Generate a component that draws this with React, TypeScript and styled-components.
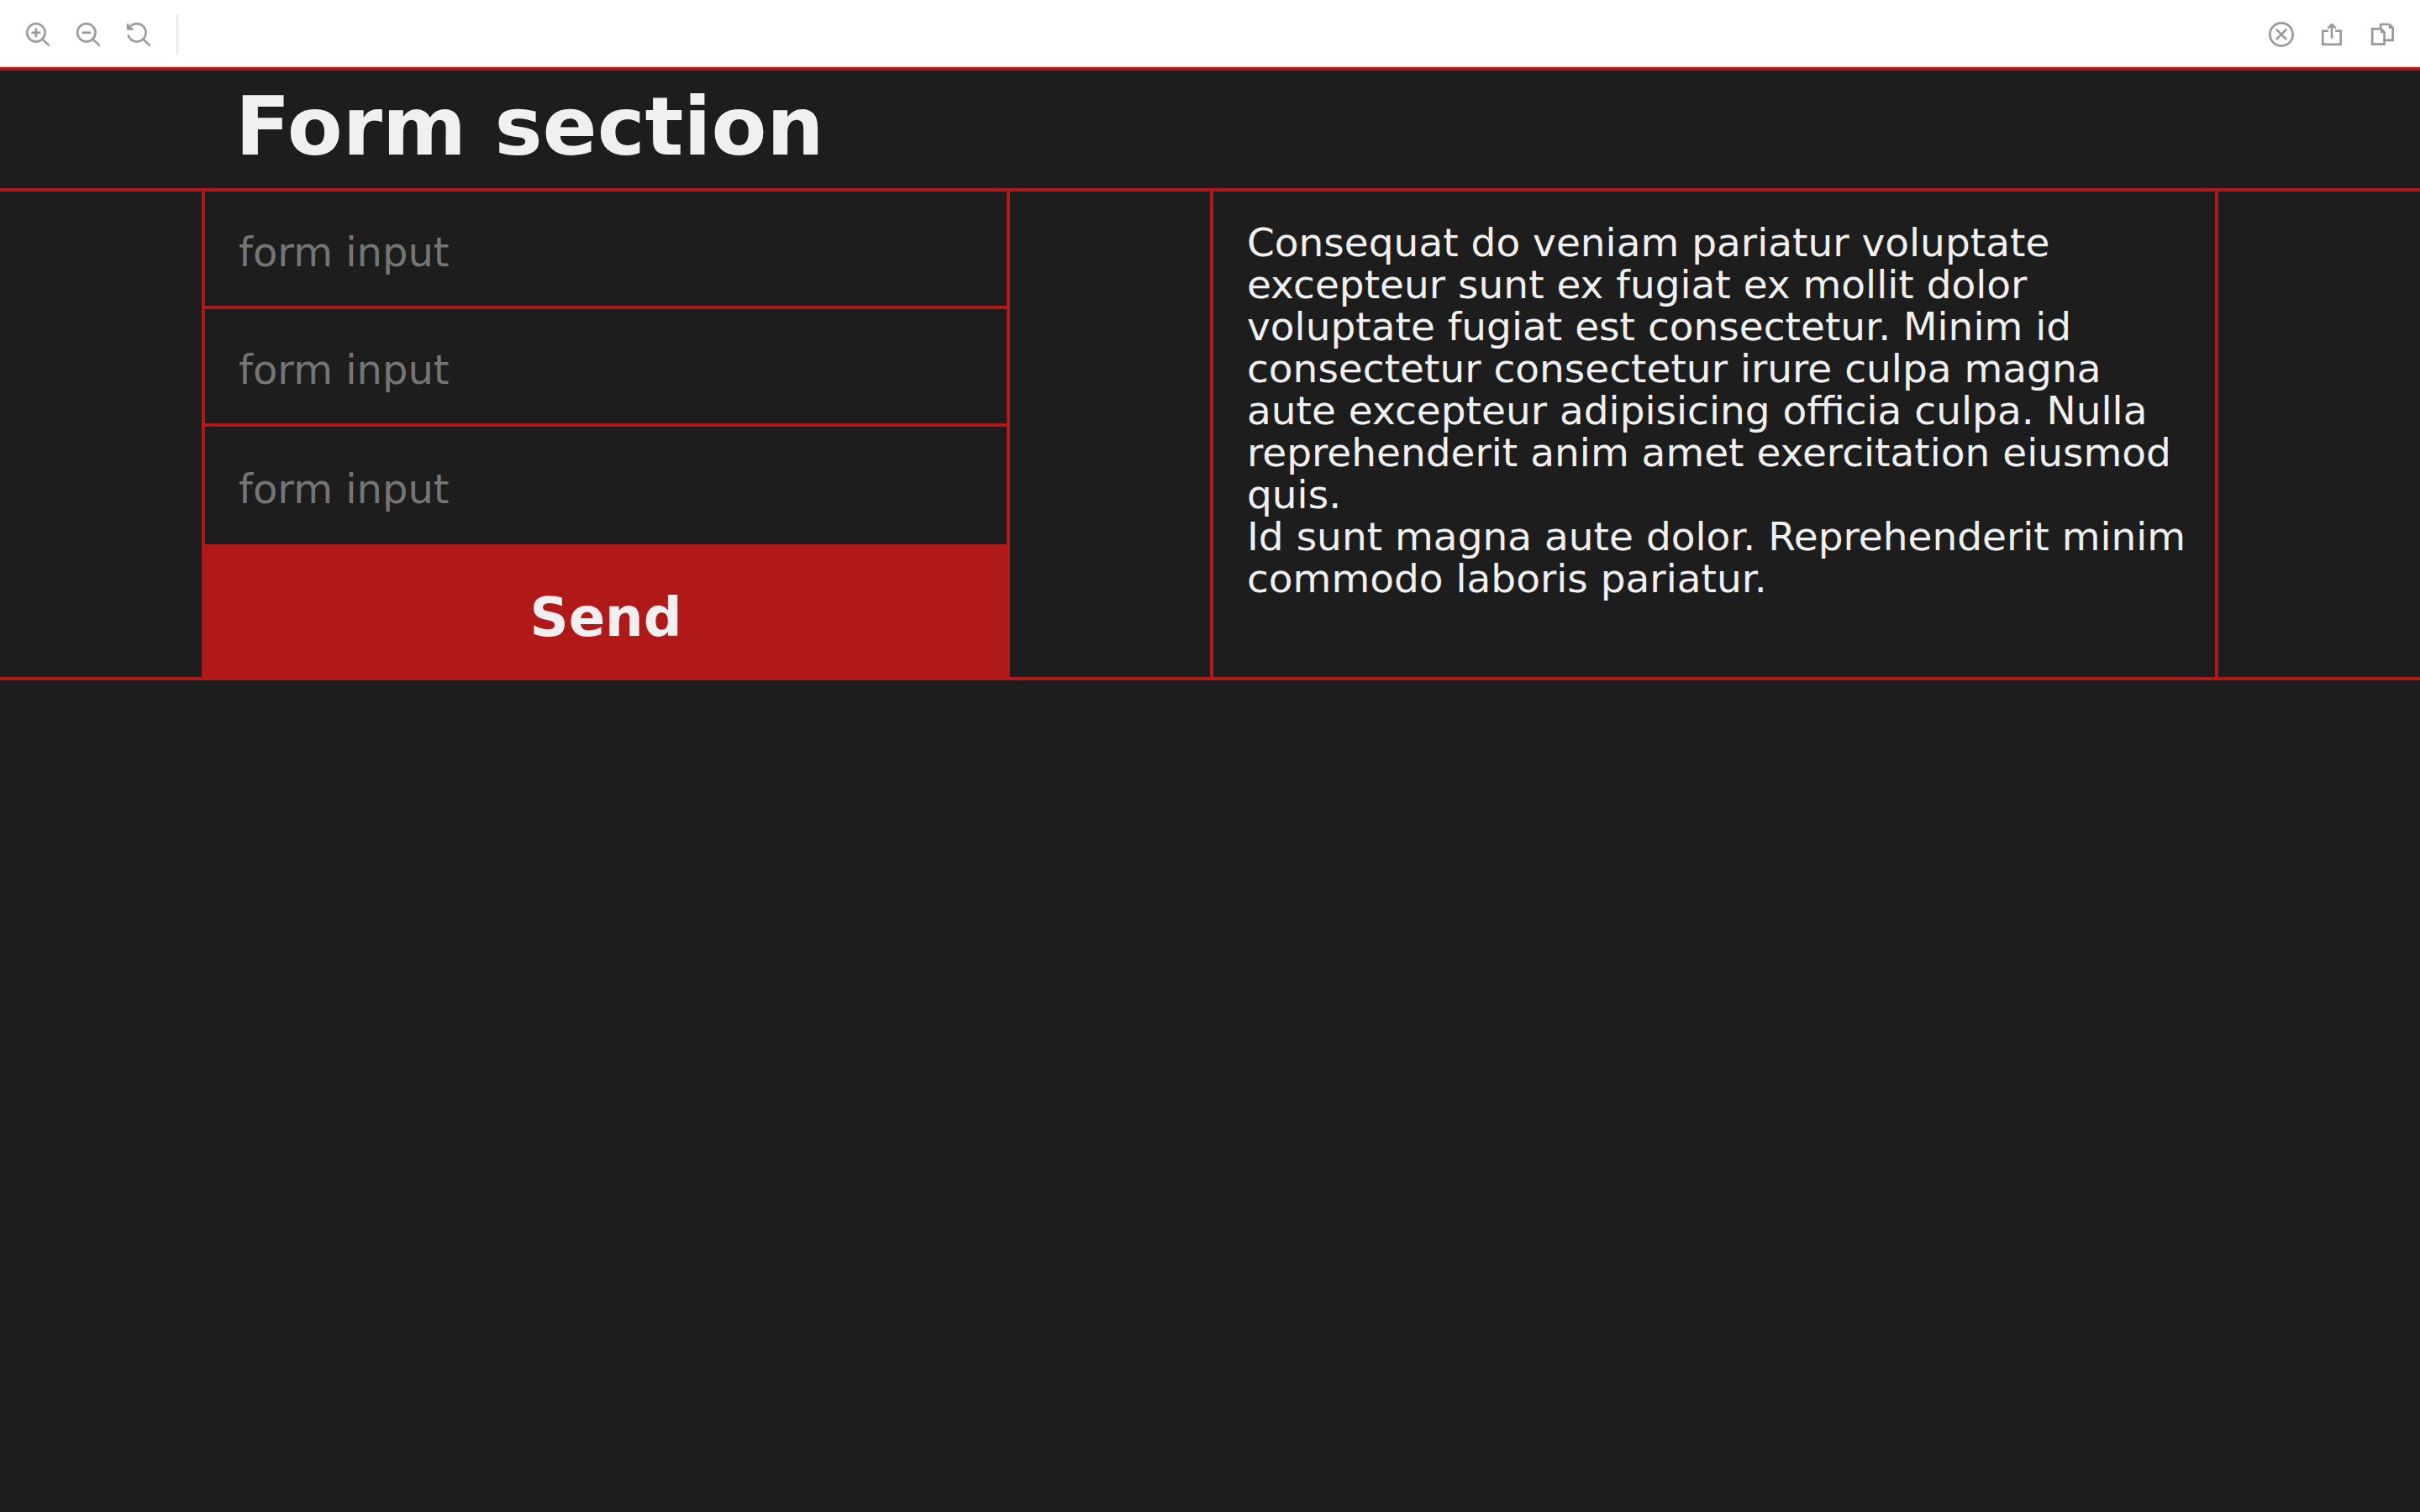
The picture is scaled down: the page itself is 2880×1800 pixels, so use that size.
import React from "react";
import styled, { createGlobalStyle } from "styled-components";

const theme = {
  red: "#b11818",
  dark: "#1d1d1d",
  light: "#f0f0f0",
  muted: "#757575",
  icon: "#999999",
  rule: "#e6e6e6",
};

const GlobalStyle = createGlobalStyle`
  *, *::before, *::after { box-sizing: border-box; }
  body {
    margin: 0;
    background: ${theme.dark};
    color: ${theme.light};
    font-family: "DejaVu Sans", Verdana, sans-serif;
  }
`;

const Toolbar = styled.header`
  display: flex;
  align-items: center;
  justify-content: space-between;
  height: 80px;
  padding: 4px 15px 0;
  background: #ffffff;
  border-bottom: 2px solid ${theme.rule};
`;

const ToolGroup = styled.div`
  display: flex;
  align-items: center;
`;

const ToolButton = styled.button`
  display: flex;
  align-items: center;
  justify-content: center;
  width: 60px;
  height: 56px;
  padding: 0;
  border: 0;
  background: transparent;
  color: ${theme.icon};
  cursor: pointer;
`;

const Divider = styled.span`
  width: 2px;
  height: 48px;
  margin-left: 15px;
  background: ${theme.rule};
`;

const Icon = styled.svg`
  display: block;
  width: 30px;
  height: 30px;
  fill: currentColor;
`;

const SolidGroup = styled.g`
  stroke: currentColor;
  stroke-width: 0.25;
`;

const LineGroup = styled.g`
  fill: none;
  stroke: currentColor;
  stroke-width: 1.25;
`;

const Section = styled.section`
  border-top: 4px solid ${theme.red};
  border-bottom: 4px solid ${theme.red};
`;

const SectionHeader = styled.div`
  display: flex;
  align-items: center;
  height: 144px;
  padding: 0 0 6px calc(100% / 12 + 40px);
  border-bottom: 4px solid ${theme.red};
`;

const Title = styled.h1`
  margin: 0;
  font-size: 96px;
  line-height: 120px;
  font-weight: 700;
`;

const Columns = styled.div`
  display: grid;
  grid-template-columns: 1fr 4fr 1fr 5fr 1fr;
`;

const Form = styled.form`
  grid-column: 2;
  display: flex;
  flex-direction: column;
  margin-right: -2px;
  border: solid ${theme.red};
  border-width: 0 4px;
`;

const Field = styled.input`
  width: 100%;
  height: 140px;
  padding: 8px 40px 0;
  border: 0;
  border-bottom: 4px solid ${theme.red};
  border-radius: 0;
  outline: 0;
  background: transparent;
  color: ${theme.light};
  font-family: inherit;
  font-size: 48px;

  &:last-of-type {
    border-bottom: 0;
  }

  &::placeholder {
    color: ${theme.muted};
    opacity: 1;
  }
`;

const SendButton = styled.button`
  height: 158px;
  padding: 16px 0 0;
  border: 0;
  background: ${theme.red};
  color: ${theme.light};
  font-family: inherit;
  font-size: 64px;
  font-weight: 700;
  cursor: pointer;
`;

const Copy = styled.div`
  grid-column: 4;
  padding: 36px 32px 36px 40px;
  border: solid ${theme.red};
  border-width: 0 4px;
  font-size: 47px;
  line-height: 50px;
`;

const Paragraph = styled.p`
  margin: 0;
`;

const LENS =
  "M9.544 10.206a5.5 5.5 0 11.662-.662.5.5 0 01.148.102l3 3a.5.5 0 01-.708.708l-3-3a.5.5 0 01-.102-.148zM10.5 6a4.5 4.5 0 10-9 0 4.5 4.5 0 009 0z";

const ZoomIn = () => (
  <Icon viewBox="0 0 14 14" aria-hidden="true">
    <SolidGroup>
      <path d="M6 3.5a.5.5 0 01.5.5v1.5H8a.5.5 0 010 1H6.5V8a.5.5 0 01-1 0V6.5H4a.5.5 0 010-1h1.5V4a.5.5 0 01.5-.5z" />
      <path fillRule="evenodd" d={LENS} />
    </SolidGroup>
  </Icon>
);

const ZoomOut = () => (
  <Icon viewBox="0 0 14 14" aria-hidden="true">
    <SolidGroup>
      <path d="M4 5.5a.5.5 0 000 1h4a.5.5 0 000-1H4z" />
      <path fillRule="evenodd" d={LENS} />
    </SolidGroup>
  </Icon>
);

const ZoomReset = () => (
  <Icon viewBox="0 0 14 14" aria-hidden="true">
    <SolidGroup>
      <path d="M1.5 2.837V1.5a.5.5 0 00-1 0V4a.5.5 0 00.5.5h2.5a.5.5 0 000-1H2.258a4.5 4.5 0 11-.496 4.016.5.5 0 10-.942.337 5.502 5.502 0 008.724 2.353.5.5 0 00.102.148l3 3a.5.5 0 00.708-.708l-3-3a.5.5 0 00-.148-.102A5.5 5.5 0 101.5 2.837z" />
      <path d="M1 1.6v2.4h2.4z" />
    </SolidGroup>
  </Icon>
);

const CloseCircle = () => (
  <Icon viewBox="0 0 14 14" aria-hidden="true">
    <LineGroup>
      <circle cx="7" cy="7" r="6.35" />
      <path strokeLinecap="round" d="M4.5 4.5l5 5M9.5 4.5l-5 5" />
    </LineGroup>
  </Icon>
);

const Share = () => (
  <Icon viewBox="0 0 14 14" aria-hidden="true">
    <LineGroup>
      <path strokeLinecap="round" strokeLinejoin="round" d="M7 8.7V1.5M5.2 3.2L7 1.5l1.8 1.7" />
      <path d="M5.1 5H2v7.5h10V5H8.9" />
    </LineGroup>
  </Icon>
);

const CopyPages = () => (
  <Icon viewBox="0 0 14 14" aria-hidden="true">
    <LineGroup>
      <path d="M1.5 3.9h4.8l1.9 1.9v6.6H1.5z" />
      <path d="M6.1 3.8V1.4h4.9l1.9 1.9v6.9H8.5" />
    </LineGroup>
    <path d="M6 3.6v2.6h2.6zM10.7 1.1v2.6h2.6z" />
  </Icon>
);

const fields = ["first", "second", "third"];

export default function App() {
  return (
    <>
      <GlobalStyle />
      <Toolbar>
        <ToolGroup>
          <ToolButton type="button" aria-label="Zoom in"><ZoomIn /></ToolButton>
          <ToolButton type="button" aria-label="Zoom out"><ZoomOut /></ToolButton>
          <ToolButton type="button" aria-label="Reset zoom"><ZoomReset /></ToolButton>
          <Divider />
        </ToolGroup>
        <ToolGroup>
          <ToolButton type="button" aria-label="Close"><CloseCircle /></ToolButton>
          <ToolButton type="button" aria-label="Share"><Share /></ToolButton>
          <ToolButton type="button" aria-label="Copy"><CopyPages /></ToolButton>
        </ToolGroup>
      </Toolbar>
      <Section>
        <SectionHeader>
          <Title>Form section</Title>
        </SectionHeader>
        <Columns>
          <Form onSubmit={(event) => event.preventDefault()}>
            {fields.map((name) => (
              <Field key={name} name={name} type="text" placeholder="form input" aria-label="form input" />
            ))}
            <SendButton type="submit">Send</SendButton>
          </Form>
          <Copy>
            <Paragraph>
              Consequat do veniam pariatur voluptate excepteur sunt ex fugiat ex mollit dolor
              voluptate fugiat est consectetur. Minim id consectetur consectetur irure culpa magna
              aute excepteur adipisicing officia culpa. Nulla reprehenderit anim amet exercitation
              eiusmod quis.
            </Paragraph>
            <Paragraph>
              Id sunt magna aute dolor. Reprehenderit minim commodo laboris pariatur.
            </Paragraph>
          </Copy>
        </Columns>
      </Section>
    </>
  );
}
